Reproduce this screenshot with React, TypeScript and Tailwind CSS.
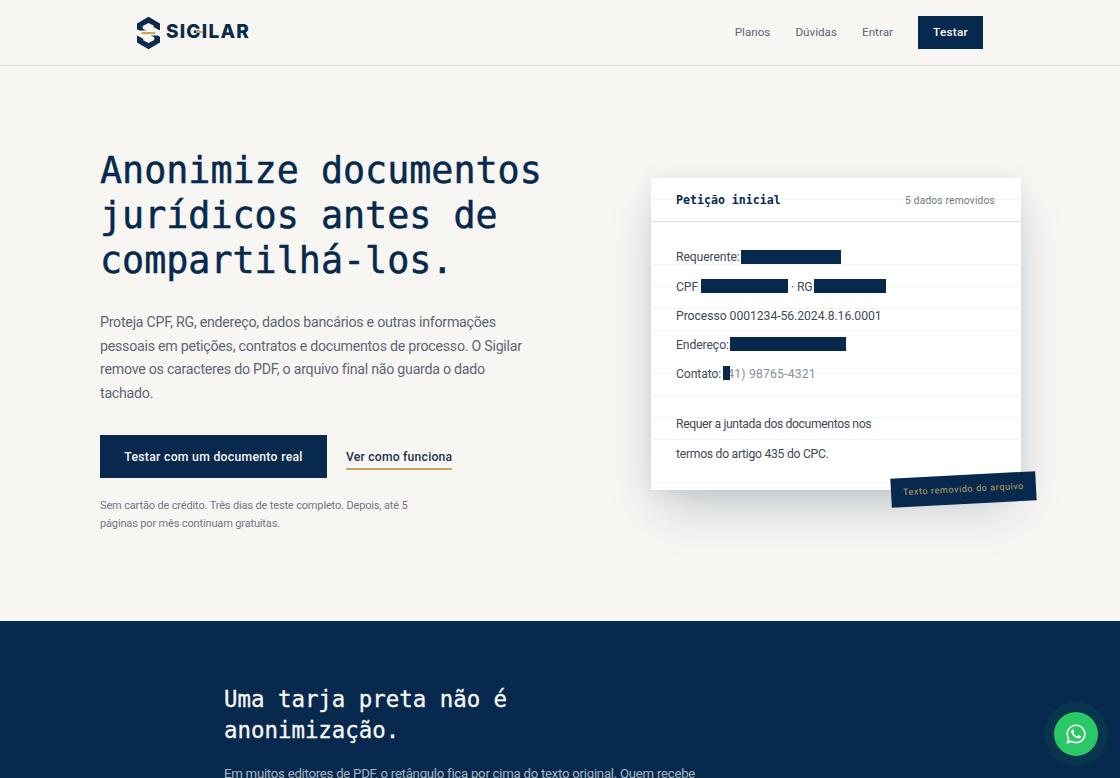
import { FaWhatsapp } from 'react-icons/fa';

const navLinks = ['Planos', 'Dúvidas', 'Entrar'];

const Logo = () => (
  <div className="flex items-center gap-[6px]">
    <svg width="23" height="34" viewBox="0 0 24 34" fill="#0b2a4a">
      <path d="M12 0 L24 7 V14.5 L17.5 11 V9.5 L12 6.5 L6 9.8 V12.5 L9.5 14.5 H2.5 L0 13 V7 Z" />
      <path d="M12 34 L0 27 V19.5 L6.5 23 V24.5 L12 27.5 L18 24.2 V21.5 L14.5 19.5 H21.5 L24 21 V27 Z" />
      <rect x="5" y="16" width="14" height="2.2" fill="#c9a45c" />
    </svg>
    <span className="relative font-['Inter',sans-serif] text-[19px] font-extrabold tracking-[1.2px] text-[#0b2a4a]">
      SIGILAR
      <span className="absolute left-[30px] top-[13px] h-[2px] w-[6px] bg-[#c9a45c]" />
    </span>
  </div>
);

const Redacted = ({ className }: { className: string }) => (
  <span className={`mb-[2px] inline-block h-[14px] bg-[#06294d] ${className}`} />
);

const Row = ({ children }: { children: React.ReactNode }) => (
  <p className="flex h-[29.2px] items-center whitespace-pre">{children}</p>
);

export default function App() {
  return (
    <div className="h-[778px] overflow-hidden bg-[#f8f6f3] font-['Roboto',sans-serif]">
      <header className="h-[66px] border-b border-[#e2e1de]">
        <div className="mx-auto flex h-[65px] max-w-[846px] items-center justify-between">
          <Logo />
          <nav className="flex items-center gap-[25px] text-[11.7px] text-[#5d6675]">
            {navLinks.map((link) => (
              <a key={link}>{link}</a>
            ))}
            <a className="flex h-[33px] w-[65px] items-center justify-center bg-[#06294d] font-medium tracking-[0.3px] text-white">
              Testar
            </a>
          </nav>
        </div>
      </header>

      <section className="ml-[100px] flex h-[555px] w-[921px] items-start justify-between">
        <div className="w-[450px] pt-[82px]">
          <h1 className="font-['DejaVu_Sans_Mono',monospace] text-[36.7px] leading-[45px] text-[#06294d] [-webkit-text-stroke:0.5px_#06294d]">
            Anonimize documentos jurídicos antes de compartilhá-los.
          </h1>
          <p className="mt-[28px] w-[426px] text-[14.2px] leading-[23.6px] tracking-[-0.25px] text-[#5d6675]">
            Proteja CPF, RG, endereço, dados bancários e outras informações pessoais em petições, contratos e documentos de processo. O Sigilar remove os caracteres do PDF, o arquivo final não guarda o dado tachado.
          </p>
          <div className="mt-[30px] flex items-center gap-[19px]">
            <a className="flex h-[43px] w-[227px] items-center justify-center bg-[#06294d] pt-px text-[12.2px] font-medium tracking-[0.3px] text-[#f8f6f3]">
              Testar com um documento real
            </a>
            <a className="mt-[4px] border-b-2 border-[#c9a45c] pb-[1px] text-[12.2px] font-medium tracking-[0.2px] text-[#1d3350]">
              Ver como funciona
            </a>
          </div>
          <p className="mt-[19px] w-[320px] text-[11px] leading-[18px] tracking-[-0.15px] text-[#6f7785]">
            Sem cartão de crédito. Três dias de teste completo. Depois, até 5 páginas por mês continuam gratuitas.
          </p>
        </div>

        <div className="relative mt-[112px] h-[312px] w-[370px] bg-white bg-[repeating-linear-gradient(180deg,transparent_0,transparent_21px,#f5f5f4_21px,#f5f5f4_21.8px)] shadow-[0_24px_48px_-8px_rgba(6,41,77,0.22),0_2px_20px_rgba(6,41,77,0.07)]">
          <div className="flex h-[44px] items-center justify-between border-b border-[#dfdfdd] pl-[25px] pr-[26px] pt-[2px]">
            <span className="font-['DejaVu_Sans_Mono',monospace] text-[11.6px] font-bold text-[#06294d]">Petição inicial</span>
            <span className="text-[10.2px] tracking-[0.2px] text-[#6f7785]">5 dados removidos</span>
          </div>
          <div className="pl-[25px] pt-[21px] text-[12.2px] tracking-[-0.1px] text-[#3f4957]">
            <Row>Requerente: <Redacted className="-ml-[1.5px] w-[100px]" /></Row>
            <Row>CPF <Redacted className="w-[87px]" /> · RG <Redacted className="-ml-[1px] w-[72px]" /></Row>
            <Row><span className="tracking-[-0.05px]">Processo 0001234-56.2024.8.16.0001</span></Row>
            <Row>Endereço: <Redacted className="-ml-[2px] w-[116px]" /></Row>
            <Row>
              Contato: <span className="relative z-10 -ml-[1px] mb-[2px] inline-block h-[14px] w-[7px] bg-[#06294d]" />
              <span className="-ml-[3px] tracking-[0.2px] text-[#8a909b]">41) 98765-4321</span>
            </Row>
            <div className="h-[21px]" />
            <Row><span className="tracking-[-0.38px]">Requer a juntada dos documentos nos</span></Row>
            <Row><span className="tracking-[-0.28px]">termos do artigo 435 do CPC.</span></Row>
          </div>
          <span className="absolute -right-[15px] bottom-[-14px] flex h-[29px] w-[145px] -rotate-3 items-center justify-center bg-[#06294d] text-[9px] tracking-[0.6px] text-[#c0a060]">
            Texto removido do arquivo
          </span>
        </div>
      </section>

      <section className="h-[400px] bg-[#06294d]">
        <div className="mx-auto w-[672px] pt-[63px]">
          <h2 className="w-[320px] font-['DejaVu_Sans_Mono',monospace] text-[22.4px] leading-[31px] text-[#f8f6f3] [-webkit-text-stroke:0.3px_#f8f6f3]">
            Uma tarja preta não é anonimização.
          </h2>
          <p className="mt-[16px] w-[480px] text-[13.2px] leading-[24px] tracking-[-0.25px] text-[#a9b5c4]">
            Em muitos editores de PDF, o retângulo fica por cima do texto original. Quem recebe o arquivo ainda pode selecionar e copiar o conteúdo.
          </p>
        </div>
      </section>

      <a className="fixed bottom-[22px] right-[22px] flex h-[44px] w-[44px] items-center justify-center rounded-full bg-[#2bc966] text-white shadow-[0_0_0_10px_rgba(43,201,102,0.07)]">
        <FaWhatsapp className="h-[22px] w-[22px]" />
      </a>
    </div>
  );
}
